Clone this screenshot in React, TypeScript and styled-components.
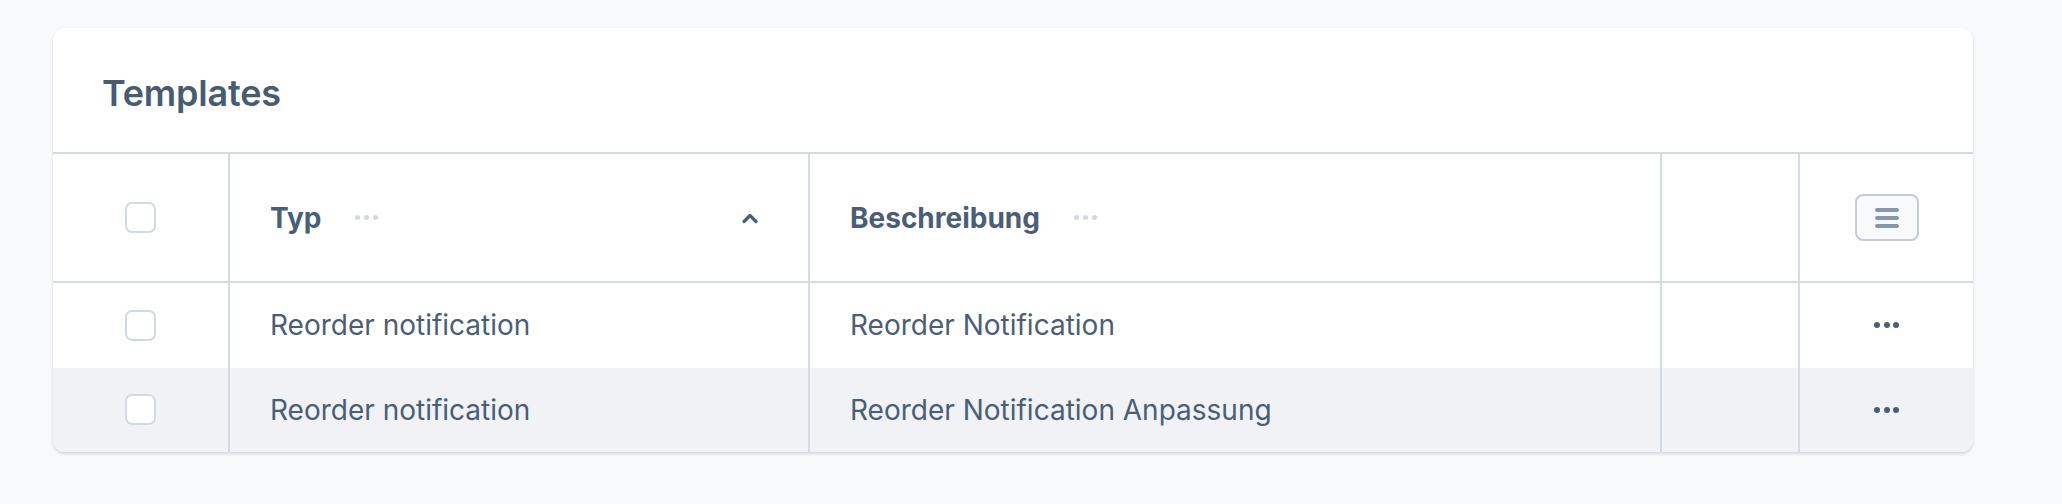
import styled, { createGlobalStyle } from "styled-components"

const GlobalStyle = createGlobalStyle`
	body {
		margin: 0;
		background: #f8f9fb;
		font-family: Inter, "Noto Sans", "Liberation Sans", sans-serif;
	}
`

const COLUMNS = "175px 580px 852px 138px 175px"
const LINE = "#d3dbe4"
const TEXT = "#4a5e76"

const Page = styled.div`
	padding: 28px 0 54px 53px;
`

const Card = styled.div`
	width: 1920px;
	background: #fff;
	border-radius: 12px;
	overflow: hidden;
	box-shadow: 0 2px 3px rgba(30, 45, 70, 0.16), 0 0 1px rgba(30, 45, 70, 0.08);
`

const Title = styled.h2`
	margin: 0;
	height: 126px;
	box-sizing: border-box;
	padding: 6px 0 0 49px;
	display: flex;
	align-items: center;
	font-size: 36px;
	font-weight: 600;
	color: #475b72;
	letter-spacing: -0.2px;
	border-bottom: 2px solid ${LINE};
`

const Row = styled.div<{ $head?: boolean; $shade?: boolean }>`
	display: grid;
	grid-template-columns: ${COLUMNS};
	height: ${(p) => (p.$head ? "127px" : "84.5px")};
	background: ${(p) => (p.$shade ? "#f0f2f5" : "#fff")};
	border-bottom: ${(p) => (p.$head ? `2px solid ${LINE}` : "none")};
`

const Cell = styled.div<{ $center?: boolean; $first?: boolean }>`
	display: flex;
	align-items: center;
	justify-content: ${(p) => (p.$center ? "center" : "flex-start")};
	padding: 0 40px;
	border-left: ${(p) => (p.$first ? "none" : `2px solid ${LINE}`)};
	font-size: 28px;
	color: ${TEXT};
	white-space: nowrap;
	overflow: hidden;
`

const HeadLabel = styled.span`
	font-weight: 700;
`

const MoreDots = styled.span<{ $light?: boolean }>`
	display: inline-flex;
	gap: 4px;
	margin-left: 34px;
	i {
		width: ${(p) => (p.$light ? "5px" : "6px")};
		height: ${(p) => (p.$light ? "5px" : "6px")};
		border-radius: 50%;
		background: ${(p) => (p.$light ? "#d1d8e1" : "#4a5e76")};
	}
`

const RowDots = styled(MoreDots)`
	margin-left: 0;
	gap: 3.5px;
`

const Spacer = styled.div`
	flex: 1;
`

const Checkbox = styled.span`
	width: 31px;
	height: 31px;
	box-sizing: border-box;
	border: 2px solid #d1dae4;
	border-radius: 7px;
	background: #fff;
`

const MenuButton = styled.button`
	width: 64px;
	height: 47px;
	box-sizing: border-box;
	border: 2px solid #c3cdd9;
	border-radius: 8px;
	background: #f7f9fb;
	display: flex;
	flex-direction: column;
	align-items: center;
	justify-content: center;
	gap: 4px;
	padding: 0;
	span {
		width: 24px;
		height: 4px;
		border-radius: 2px;
		background: #8597ab;
	}
`

const Dots = ({ light }: { light?: boolean }) =>
	light ? (
		<MoreDots $light>
			<i />
			<i />
			<i />
		</MoreDots>
	) : (
		<RowDots>
			<i />
			<i />
			<i />
		</RowDots>
	)

const SortUp = () => (
	<svg width='18' height='12' viewBox='0 0 18 12' style={{ marginRight: 9 }}>
		<path d='M3 9.5 L9 3.5 L15 9.5' fill='none' stroke='#4a5e76' strokeWidth='3.2' strokeLinecap='round' strokeLinejoin='round' />
	</svg>
)

const rows = [
	{ typ: "Reorder notification", desc: "Reorder Notification" },
	{ typ: "Reorder notification", desc: "Reorder Notification Anpassung" },
]

export default function App() {
	return (
		<>
			<GlobalStyle />
			<Page>
				<Card>
					<Title>Templates</Title>
					<Row $head>
						<Cell $first $center>
							<Checkbox />
						</Cell>
						<Cell>
							<HeadLabel>Typ</HeadLabel>
							<Dots light />
							<Spacer />
							<SortUp />
						</Cell>
						<Cell>
							<HeadLabel>Beschreibung</HeadLabel>
							<Dots light />
						</Cell>
						<Cell />
						<Cell $center>
							<MenuButton>
								<span />
								<span />
								<span />
							</MenuButton>
						</Cell>
					</Row>
					{rows.map((r, i) => (
						<Row key={i} $shade={i % 2 === 1}>
							<Cell $first $center>
								<Checkbox />
							</Cell>
							<Cell>{r.typ}</Cell>
							<Cell>{r.desc}</Cell>
							<Cell />
							<Cell $center>
								<Dots />
							</Cell>
						</Row>
					))}
				</Card>
			</Page>
		</>
	)
}
